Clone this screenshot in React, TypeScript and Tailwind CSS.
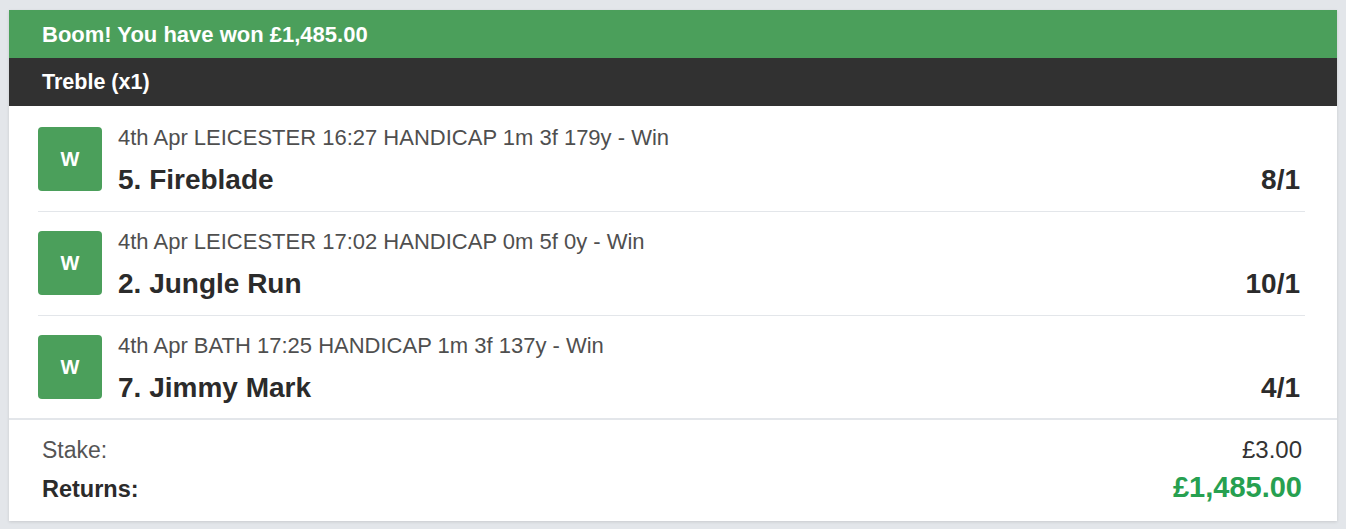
import React from 'react';

interface Leg {
  meta: string;
  name: string;
  odds: string;
}

const legs: Leg[] = [
  { meta: '4th Apr LEICESTER 16:27 HANDICAP 1m 3f 179y - Win', name: '5. Fireblade', odds: '8/1' },
  { meta: '4th Apr LEICESTER 17:02 HANDICAP 0m 5f 0y - Win', name: '2. Jungle Run', odds: '10/1' },
  { meta: '4th Apr BATH 17:25 HANDICAP 1m 3f 137y - Win', name: '7. Jimmy Mark', odds: '4/1' },
];

const font = { fontFamily: '"Liberation Sans", Arial, Helvetica, sans-serif' };

function LegRow({ leg, last }: { leg: Leg; last: boolean }) {
  return (
    <div
      className={
        last
          ? 'flex gap-4 h-[102px] pt-[19px]'
          : 'flex gap-4 h-[104px] pt-[19px] border-b border-[#e3e6ea]'
      }
    >
      <div className="w-16 h-16 shrink-0 rounded-[4px] bg-[#4b9f5b] flex items-center justify-center text-white font-bold text-[20px]">
        W
      </div>
      <div className="flex-1 min-w-0">
        <div className="text-[22px] leading-[22px] text-[#4f4f4f]">{leg.meta}</div>
        <div className="mt-[16px] flex items-baseline justify-between text-[28px] leading-[30px] font-bold text-[#2b2b2b]">
          <span>{leg.name}</span>
          <span className="pr-[5px]">{leg.odds}</span>
        </div>
      </div>
    </div>
  );
}

export default function App() {
  return (
    <div className="min-h-[529px] bg-[#e3e6ea] pt-[10px] px-[9px] pb-[10px]" style={font}>
      <div className="bg-white shadow-[0_1px_3px_rgba(0,0,0,0.12)]">
        <div className="h-12 bg-[#4b9f5b] flex items-center pl-[33px] text-white font-bold text-[22px]">
          Boom! You have won £1,485.00
        </div>
        <div className="h-12 bg-[#313131] flex items-center pl-[33px] text-white font-bold text-[21.5px]">
          Treble (x1)
        </div>
        <div className="pt-[2px] pl-[29px] pr-[32px]">
          {legs.map((leg, i) => (
            <LegRow key={leg.name} leg={leg} last={i === legs.length - 1} />
          ))}
        </div>
        <div className="border-t-2 border-[#e3e6ea] pl-[33px] pr-[35px] pt-[14px] pb-[14px]">
          <div className="flex items-baseline justify-between leading-[32px]">
            <span className="text-[23px] text-[#555555]">Stake:</span>
            <span className="text-[24px] text-[#333333]">£3.00</span>
          </div>
          <div className="mt-[3px] flex items-baseline justify-between leading-[36px]">
            <span className="text-[23.5px] font-bold text-[#2b2b2b]">Returns:</span>
            <span className="text-[29px] font-bold text-[#27a050]">£1,485.00</span>
          </div>
        </div>
      </div>
    </div>
  );
}
